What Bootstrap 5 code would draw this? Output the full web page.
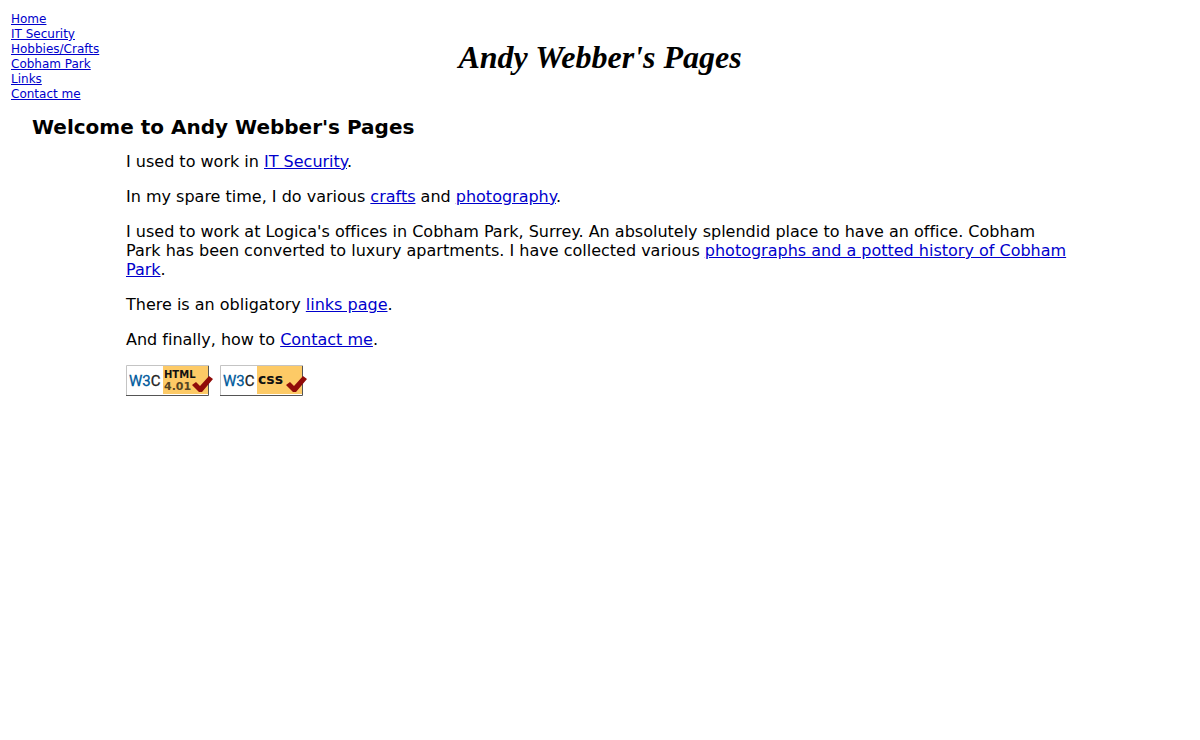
<!DOCTYPE html>
<html lang="en">
<head>
<meta charset="utf-8">
<meta name="viewport" content="width=device-width, initial-scale=1">
<title>Andy Webber's Pages</title>
<link rel="stylesheet" href="https://cdn.jsdelivr.net/npm/bootstrap@5.3.0/dist/css/bootstrap.min.css">
<style>
body { font-family: Verdana, "DejaVu Sans", sans-serif; font-size: 16px; line-height: 19px; font-variant-ligatures: none; color: #000; background: #fff; }
a { color: #0000cc; text-decoration: underline; }
.site-head { padding: 12px 11px 0; }
.site-nav { font-size: 12px; line-height: 15px; }
.site-title { font: italic bold 32px/37px "Liberation Serif", "Times New Roman", serif; padding-top: 27px; }
.welcome { font-size: 20px; line-height: 26px; font-weight: bold; margin: 12px 32px 12px; }
.copy { margin: 0 130px 0 126px; }
.copy p { margin-bottom: 16px; }
.badges { gap: 6px; }
.badges svg { display: block; }
.w3c { font: 15px Roboto, sans-serif; fill: #005a9c; stroke: #005a9c; stroke-width: .3px; }
.w3c-c { fill: #222; stroke: #222; }
.label { font-family: "DejaVu Sans", sans-serif; font-weight: bold; fill: #111; }
</style>
</head>
<body>
<header class="site-head row g-0">
  <nav class="site-nav nav flex-column col" aria-label="Site">
    <div><a href="#home">Home</a></div>
    <div><a href="#security">IT Security</a></div>
    <div><a href="#crafts">Hobbies/Crafts</a></div>
    <div><a href="#cobham">Cobham Park</a></div>
    <div><a href="#links">Links</a></div>
    <div><a href="#contact">Contact me</a></div>
  </nav>
  <h1 class="site-title col-auto mb-0">Andy Webber's Pages</h1>
  <div class="col"></div>
</header>
<main>
  <h2 class="welcome">Welcome to Andy Webber's Pages</h2>
  <div class="copy">
    <p>I used to work in <a href="#security">IT Security</a>.</p>
    <p>In my spare time, I do various <a href="#crafts">crafts</a> and <a href="#photography">photography</a>.</p>
    <p>I used to work at Logica's offices in Cobham Park, Surrey. An absolutely splendid place to have an office. Cobham Park has been converted to luxury apartments. I have collected various <a href="#cobham">photographs and a potted history of Cobham Park</a>.</p>
    <p>There is an obligatory <a href="#links">links page</a>.</p>
    <p>And finally, how to <a href="#contact">Contact me</a>.</p>
    <div class="badges d-flex">
      <a href="#html" aria-label="Valid HTML 4.01"><svg width="88" height="31" viewBox="0 0 88 31">
        <path d="M0 0h83v30H0z" fill="#fff"/><path d="M37 1h45v28H37z" fill="#fdca66"/>
        <path d="M.5 30V.5H83" fill="none" stroke="#c4c4c4"/><path d="M0 30.5h82.500V1" fill="none" stroke="#555"/>
        <text class="w3c" x="3" y="21">W3<tspan class="w3c-c">C</tspan></text>
        <text class="label" x="38" y="13" font-size="10">HTML</text>
        <text class="label" x="38" y="25" font-size="11" style="fill:#542">4.01</text>
        <path d="M66 20l4-3 4 4 9-10 4 3-11 13h-3z" fill="#900b09"/>
      </svg></a>
      <a href="#css" aria-label="Valid CSS"><svg width="88" height="31" viewBox="0 0 88 31">
        <path d="M0 0h83v30H0z" fill="#fff"/><path d="M37 1h45v28H37z" fill="#fdca66"/>
        <path d="M.5 30V.5H83" fill="none" stroke="#c4c4c4"/><path d="M0 30.5h82.500V1" fill="none" stroke="#555"/>
        <text class="w3c" x="3" y="21">W3<tspan class="w3c-c">C</tspan></text>
        <text class="label" x="38" y="19" font-size="14">css</text>
        <path d="M66 20l4-3 4 4 9-10 4 3-11 13h-3z" fill="#900b09"/>
      </svg></a>
    </div>
  </div>
</main>
<script src="https://cdn.jsdelivr.net/npm/bootstrap@5.3.0/dist/js/bootstrap.bundle.min.js"></script>
</body>
</html>
